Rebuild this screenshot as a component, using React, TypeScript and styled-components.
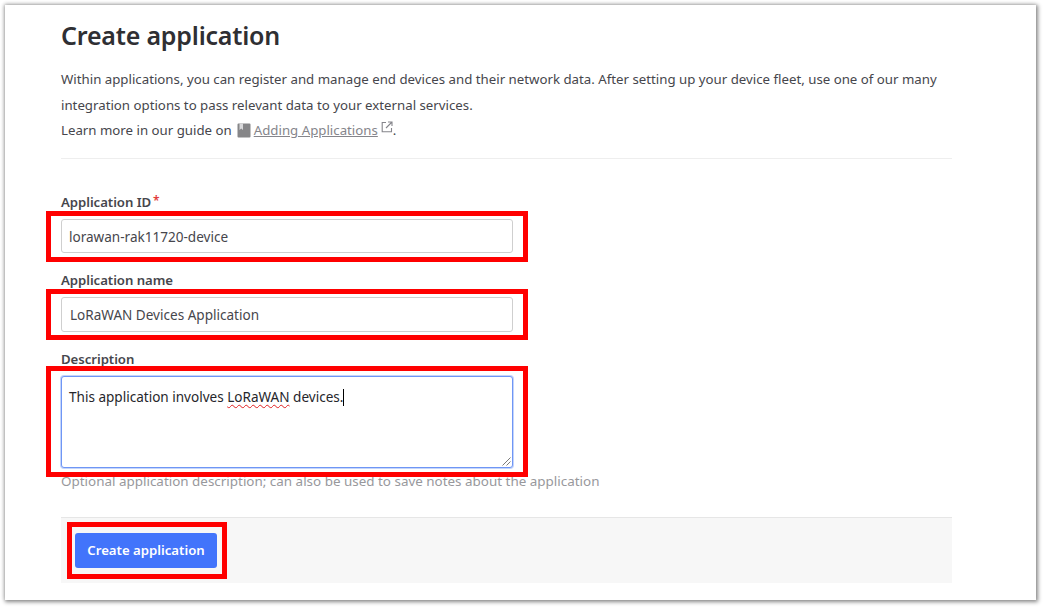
import React from "react";
import styled, { createGlobalStyle } from "styled-components";

const Global = createGlobalStyle`
  html, body { margin: 0; padding: 0; background: #fff; }
  body { width: 1045px; height: 609px; overflow: hidden; font-family: "Noto Sans", "Liberation Sans", sans-serif; }
`;

const Card = styled.main`
  box-sizing: border-box;
  width: 1031px;
  height: 595px;
  margin: 5px 0 0 5px;
  padding: 0 84px 0 56px;
  background: #fff;
  box-shadow: 1px 1px 4px 1px rgba(0, 0, 0, 0.45), -1px -1px 4px rgba(0, 0, 0, 0.12);
`;

const Title = styled.h1`
  margin: 0;
  padding-top: 12px;
  height: 50px;
  font-size: 25px;
  line-height: 36px;
  font-weight: 600;
  letter-spacing: -0.2px;
  color: #2f2f33;
`;

const Intro = styled.p`
  margin: 0;
  font-size: 13.25px;
  line-height: 25.5px;
  color: #46464c;
`;

const GuideLink = styled.a`
  color: #85858b;
  text-decoration: underline;
`;

const GuideIcon = styled.svg`
  width: 14px;
  height: 15px;
  margin: 0 3px 0 5px;
  vertical-align: -3px;
`;

const ExternalIcon = styled.svg`
  width: 12px;
  height: 12px;
  margin-left: 3px;
  vertical-align: 2px;
`;

const Divider = styled.hr`
  margin: 14px 0 0;
  border: 0;
  border-top: 1px solid #eeeeee;
`;

const Form = styled.form`
  display: flex;
  flex-direction: column;
  padding-top: 34px;
`;

const Label = styled.label`
  display: block;
  height: 26px;
  font-size: 13.2px;
  line-height: 19px;
  font-weight: 600;
  letter-spacing: -0.05px;
  color: #46464c;
`;

const Required = styled.span`
  color: #e23b3b;
  margin-left: 2px;
  vertical-align: 2px;
  font-size: 12px;
  line-height: 0;
`;

const Field = styled.div<{ $gap: number }>`
  margin-bottom: ${(p) => p.$gap}px;
`;

const Highlight = styled.div<{ $t: number; $r: number; $b: number; $l: number }>`
  position: relative;
  width: fit-content;
  &::after {
    content: "";
    position: absolute;
    top: ${(p) => -p.$t}px;
    right: ${(p) => -p.$r}px;
    bottom: ${(p) => -p.$b}px;
    left: ${(p) => -p.$l}px;
    border: 5px solid #ff0000;
    pointer-events: none;
  }
`;

const Input = styled.div`
  box-sizing: border-box;
  width: 452px;
  height: 34px;
  padding: 0 7px;
  border: 1px solid #cfcfcf;
  border-radius: 3px;
  font-size: 13.55px;
  line-height: 34px;
  color: #46464c;
  background: #fff;
  white-space: nowrap;
`;

const NameInput = styled(Input)`
  height: 35px;
  padding-left: 8px;
  line-height: 35px;
`;

const TextArea = styled.div`
  position: relative;
  box-sizing: border-box;
  width: 452px;
  height: 92px;
  padding: 9px 7px;
  border: 1px solid #6f96f5;
  border-radius: 3px;
  box-shadow: 0 0 0 1px #c4d5fb;
  font-size: 13.55px;
  line-height: 22px;
  color: #26262b;
  background: #fff;
`;

const Misspelled = styled.span`
  text-decoration: underline wavy #e02020 1px;
  text-underline-offset: 2px;
`;

const Caret = styled.span`
  display: inline-block;
  width: 1px;
  height: 17px;
  background: #000;
  vertical-align: -4px;
`;

const Grip = styled.svg`
  position: absolute;
  right: 1px;
  bottom: 1px;
  width: 9px;
  height: 9px;
`;

const Help = styled.p`
  margin: 4px 0 0;
  font-size: 13.43px;
  line-height: 18px;
  color: #98989c;
`;

const Footer = styled.div`
  box-sizing: border-box;
  display: flex;
  align-items: center;
  height: 66px;
  margin-top: 27px;
  padding: 0 0 0 14px;
  background: #f7f7f7;
  border-top: 1px solid #e6e6e6;
`;

const Button = styled.button`
  display: block;
  height: 35px;
  width: 142px;
  padding: 0;
  border: 0;
  border-radius: 3px;
  background: #4274fb;
  color: #fff;
  font-family: inherit;
  font-size: 13.2px;
  font-weight: 600;
`;

export default function App() {
  return (
    <>
      <Global />
      <Card>
        <Title>Create application</Title>
        <Intro>
          Within applications, you can register and manage end devices and their network data. After setting up your device fleet, use one of our many
          <br />
          integration options to pass relevant data to your external services.
          <br />
          Learn more in our guide on
          <GuideIcon viewBox="0 0 14 15" aria-hidden="true">
            <path d="M1.5 0.5h11a1 1 0 0 1 1 1v12a1 1 0 0 1-1 1h-11a1 1 0 0 1-1-1v-12a1 1 0 0 1 1-1z" fill="#868688" />
            <path d="M2.5 0.5h3.5v6.5l-1.75-1.5-1.75 1.5z" fill="#d8d8da" />
          </GuideIcon>
          <GuideLink>Adding Applications</GuideLink>
          <ExternalIcon viewBox="0 0 12 12" fill="none" stroke="#85858b" strokeWidth="1.1" aria-hidden="true">
            <path d="M5 1.5H1.2v9.3h9.3V7" />
            <path d="M5 7l5.5-5.5M7 1h4v4" />
          </ExternalIcon>
          .
        </Intro>
        <Divider />
        <Form>
          <Field $gap={18}>
            <Label>
              Application ID<Required>*</Required>
            </Label>
            <Highlight $t={8} $r={15} $b={9} $l={15}>
              <Input>lorawan-rak11720-device</Input>
            </Highlight>
          </Field>
          <Field $gap={18}>
            <Label>Application name</Label>
            <Highlight $t={8} $r={15} $b={8} $l={15}>
              <NameInput>LoRaWAN Devices Application</NameInput>
            </Highlight>
          </Field>
          <Field $gap={0}>
            <Label>Description</Label>
            <Highlight $t={10} $r={15} $b={9} $l={15}>
              <TextArea>
                This application involves <Misspelled>LoRaWAN</Misspelled> devices.
                <Caret />
                <Grip viewBox="0 0 9 9" stroke="#7a7a7a" strokeWidth="1" aria-hidden="true">
                  <path d="M0.5 8.5l8-8M4.5 8.5l4-4" />
                </Grip>
              </TextArea>
            </Highlight>
          </Field>
          <Help>Optional application description; can also be used to save notes about the application</Help>
          <Footer>
            <Highlight $t={11} $r={10} $b={11} $l={8}>
              <Button type="button">Create application</Button>
            </Highlight>
          </Footer>
        </Form>
      </Card>
    </>
  );
}
